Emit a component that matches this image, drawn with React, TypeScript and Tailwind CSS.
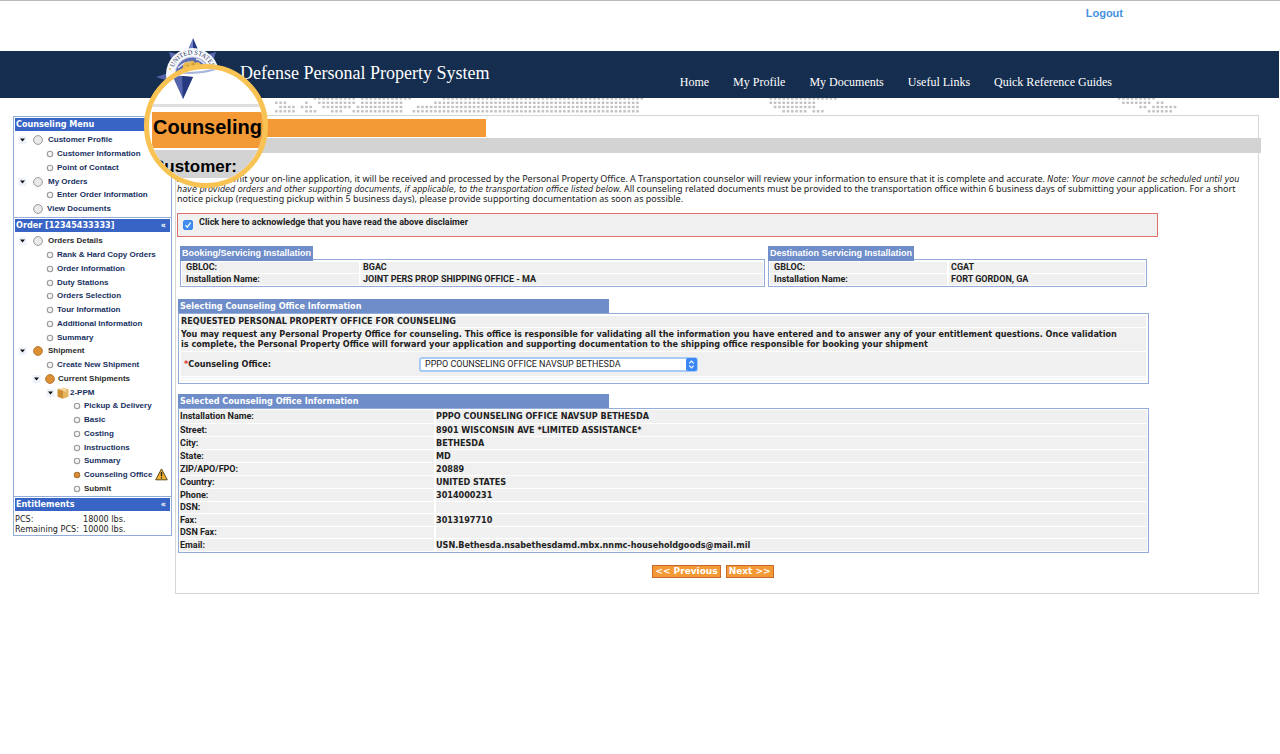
import type { ReactNode } from "react";

const WIDE = "font-['DejaVu_Sans_Condensed','DejaVu_Sans',sans-serif]";
const TITLE = "font-['DejaVu_Sans',sans-serif]";
const BODY = "font-['Noto_Sans',sans-serif]";
const LABEL = "font-['Roboto',sans-serif]";
const ARIAL = "font-['Liberation_Sans',sans-serif]";

/* ---------- header ---------- */

const navItems = ["Home", "My Profile", "My Documents", "Useful Links", "Quick Reference Guides"];

// Each row of the dotted world map is a list of [from, to] runs.
const mapRows: [number, number][][] = [
  [[313, 355], [360, 410], [441, 643], [769, 836], [1119, 1154]],
  [[275, 287], [304, 307], [317, 355], [360, 402], [433, 640], [769, 814], [1122, 1150], [1156, 1163]],
  [[279, 295], [300, 313], [321, 350], [356, 402], [416, 640], [773, 814], [1138, 1147], [1152, 1176]],
  [[275, 295], [304, 317], [330, 342], [351, 402], [411, 640], [781, 806], [811, 823], [1147, 1172]],
];

function DottedMap() {
  const dots: ReactNode[] = [];
  mapRows.forEach((runs, r) => {
    for (let i = 0; i < 215; i++) {
      const x = 276.3 + i * 4.3;
      if (runs.some(([a, b]) => x >= a && x <= b + 0.5)) {
        dots.push(<rect key={`${r}-${i}`} x={x - 1.3} y={r * 4.3 - 0.9} width="2.6" height="2.6" rx="0.6" />);
      }
    }
  });
  return (
    <svg width="1280" height="17" className="block max-w-none" fill="#c3c3c3" aria-hidden="true">
      {dots}
    </svg>
  );
}

function Seal() {
  return (
    <svg width="74" height="76" viewBox="0 0 74 76" aria-hidden="true">
      <path d="M13 14 L36 20 L20 36Z M60 14 L37 20 L53 36Z" fill="#5a68b0" />
      <path d="M0 39 L16 34 V44Z" fill="#5563ab" />
      <path d="M37 0 L30 16 L37 20Z" fill="#6f83c4" />
      <path d="M37 0 L44 16 L37 20Z" fill="#253a82" />
      <circle cx="36.500" cy="36.500" r="26.500" fill="#f7f8fb" />
      <circle cx="36.500" cy="36.500" r="17.500" fill="#5c6cae" stroke="#cfd6ea" strokeWidth="1" />
      <path d="M20 36 q8 -9 16 -1 M22 30 q6 -6 12 -6 M50 28 q-4 -6 -10 -7 M38 34 q8 -7 15 2" stroke="#dfe4f3" strokeWidth="1.300" fill="none" />
      <path d="M27 27 q3 -5 6 -2 q3 -5 6 0 q4 -3 6 2 q4 2 1 6 q-4 4 -8 1 q-4 4 -7 -1 q-5 1 -4 -6z" fill="#e9b84c" />
      <path d="M31 27 l3 3 M37 25 l1 6 M42 28 l-2 4" stroke="#a3761f" strokeWidth="0.900" />
      <circle cx="14" cy="31" r="1" fill="#e9b84c" />
      <defs>
        <path id="seal-arc" d="M16.500 36.500 A 20 20 0 0 1 56.500 36.500" />
      </defs>
      <text fontSize="6.500" fontFamily="Liberation Serif, serif" fill="#28335c">
        <textPath href="#seal-arc" startOffset="50%" textAnchor="middle">UNITED STATES</textPath>
      </text>
    </svg>
  );
}

/* ---------- sidebar ---------- */

type Icon = "big" | "small" | "bigOn" | "smallOn" | "box";
type Node = { text: string; icon: Icon; pad: string; open?: boolean; dark?: boolean; warn?: boolean };

const L0 = "pl-[3px] gap-[4px]";
const L0Leaf = "pl-[18px] gap-[3px]";
const L1Leaf = "pl-[32px] gap-[3px]";
const L1 = "pl-[17px] gap-[2px]";
const L2 = "pl-[31px] gap-[1px]";
const L3Leaf = "pl-[59px] gap-[3px]";

const counselingMenu: Node[] = [
  { text: "Customer Profile", icon: "big", pad: L0, open: true },
  { text: "Customer Information", icon: "small", pad: L1Leaf },
  { text: "Point of Contact", icon: "small", pad: L1Leaf },
  { text: "My Orders", icon: "big", pad: L0, open: true },
  { text: "Enter Order Information", icon: "small", pad: L1Leaf },
  { text: "View Documents", icon: "big", pad: L0Leaf },
];

const orderMenu: Node[] = [
  { text: "Orders Details", icon: "big", pad: L0, open: true, dark: true },
  { text: "Rank & Hard Copy Orders", icon: "small", pad: L1Leaf },
  { text: "Order Information", icon: "small", pad: L1Leaf },
  { text: "Duty Stations", icon: "small", pad: L1Leaf },
  { text: "Orders Selection", icon: "small", pad: L1Leaf },
  { text: "Tour Information", icon: "small", pad: L1Leaf },
  { text: "Additional Information", icon: "small", pad: L1Leaf },
  { text: "Summary", icon: "small", pad: L1Leaf },
  { text: "Shipment", icon: "bigOn", pad: L0, open: true, dark: true },
  { text: "Create New Shipment", icon: "small", pad: L1Leaf },
  { text: "Current Shipments", icon: "bigOn", pad: L1, open: true, dark: true },
  { text: "2-PPM", icon: "box", pad: L2, open: true },
  { text: "Pickup & Delivery", icon: "small", pad: L3Leaf },
  { text: "Basic", icon: "small", pad: L3Leaf },
  { text: "Costing", icon: "small", pad: L3Leaf },
  { text: "Instructions", icon: "small", pad: L3Leaf },
  { text: "Summary", icon: "small", pad: L3Leaf },
  { text: "Counseling Office", icon: "smallOn", pad: L3Leaf, warn: true },
  { text: "Submit", icon: "small", pad: L3Leaf, dark: true },
];

function NodeIcon({ icon }: { icon: Icon }) {
  if (icon === "box") {
    return (
      <svg width="12" height="12" viewBox="0 0 12 12" className="shrink-0" aria-hidden="true">
        <path d="M0.500 2 L6 0.500 L11.500 2 L6 3.500Z" fill="#f3d08d" />
        <path d="M0.500 2 L6 3.500 V11.800 L0.500 9.800Z" fill="#d08f35" />
        <path d="M6 3.500 L11.500 2 V9.800 L6 11.800Z" fill="#e5b45f" />
        <path d="M2.800 1.400 L8.300 2.900 V5" stroke="#fbe7bd" strokeWidth="1" fill="none" />
      </svg>
    );
  }
  if (icon === "big" || icon === "bigOn") {
    return (
      <svg width="12" height="12" viewBox="0 0 12 12" className="shrink-0" aria-hidden="true">
        <circle cx="6" cy="6" r="4.400" fill={icon === "big" ? "#e9e9e9" : "#dd9033"} stroke={icon === "big" ? "#9a9a9a" : "#b67a38"} strokeWidth="1" />
      </svg>
    );
  }
  return (
    <svg width="8" height="8" viewBox="0 0 8 8" className="shrink-0" aria-hidden="true">
      <circle cx="4" cy="4" r="2.700" fill={icon === "small" ? "#f4f4f4" : "#dd8a30"} stroke={icon === "small" ? "#9c9c9c" : "#a8763e"} strokeWidth="1.100" />
    </svg>
  );
}

function Tree({ nodes }: { nodes: Node[] }) {
  return (
    <ul className={`${ARIAL} pt-[2px] text-[8px] leading-[14px] font-bold [&>li]:h-[14px] [&>li:nth-child(4n)]:h-[13px]`}>
      {nodes.map((n, i) => (
        <li key={i} className={`flex items-center whitespace-nowrap ${n.pad}`}>
          {n.open && (
            <svg width="11" height="10" viewBox="0 0 11 10" className="shrink-0" aria-hidden="true">
              <rect x="1.500" y="1" width="8" height="8" fill="#eef3fb" />
              <path d="M3 3.500 H8 L5.500 6.500Z" fill="#111" />
            </svg>
          )}
          <NodeIcon icon={n.icon} />
          <a href="#" className={n.dark ? "text-[#2b2b2b]" : "text-[#17305f]"}>{n.text}</a>
          {n.warn && (
            <svg width="13" height="13" viewBox="0 0 13 13" className="shrink-0 self-start" role="img" aria-label="Warning">
              <path d="M6.500 0.900 L12.300 11.800 H0.700Z" fill="#f3b334" stroke="#5b4a1c" strokeWidth="1" strokeLinejoin="round" />
              <path d="M6.500 4 V8.200 M6.500 9.200 V10.600" stroke="#222" strokeWidth="1.400" />
            </svg>
          )}
        </li>
      ))}
    </ul>
  );
}

function SideTitle({ children, collapse }: { children: ReactNode; collapse?: boolean }) {
  return (
    <h2 className={`${WIDE} mx-px mt-px flex h-[13px] items-center justify-between bg-[#3864c6] pr-[4px] pl-px text-[9px] leading-[13px] font-bold text-white`}>
      <span>{children}</span>
      {collapse && <button type="button" aria-label="Collapse">«</button>}
    </h2>
  );
}

function Sidebar() {
  return (
    <nav className="mt-px w-[159px] shrink-0 self-start border border-[#93acd9]">
      <SideTitle>Counseling Menu</SideTitle>
      <Tree nodes={counselingMenu} />
      <div className="mt-px border-t border-[#93acd9]">
        <SideTitle collapse>Order [12345433333]</SideTitle>
        <Tree nodes={orderMenu} />
      </div>
      <div className="border-t border-[#93acd9]">
        <SideTitle collapse>Entitlements</SideTitle>
        <dl className={`${WIDE} grid grid-cols-[68px_1fr] pt-[3px] pb-px pl-px text-[9px] leading-[10px] whitespace-nowrap text-[#222]`}>
          <dt>PCS:</dt>
          <dd>18000 lbs.</dd>
          <dt>Remaining PCS:</dt>
          <dd>10000 lbs.</dd>
        </dl>
      </div>
    </nav>
  );
}

/* ---------- main content ---------- */

function Installation({ title, code, name, className }: { title: string; code: string; name: string; className: string }) {
  return (
    <section className={className}>
      <h3 className={`${ARIAL} relative -mb-[2px] w-fit bg-[#6e8dc9] px-[2px] text-[9px] leading-[15px] font-bold text-white`}>{title}</h3>
      <div className="border border-[#93acd9] p-px">
        <table className={`${LABEL} w-full border-collapse text-[9px] leading-[11px] font-bold text-[#222]`}>
          <tbody>
            {[["GBLOC:", code], ["Installation Name:", name]].map(([k, v]) => (
              <tr key={k} className="border-t border-white">
                <th scope="row" className="w-[178px] border-r-2 border-white bg-[#f0f0f0] p-0 pl-[4px] text-left">{k}</th>
                <td className="bg-[#f0f0f0] p-0 pl-[2px]">{v}</td>
              </tr>
            ))}
          </tbody>
        </table>
      </div>
    </section>
  );
}

function SectionTitle({ children }: { children: ReactNode }) {
  return (
    <h3 className={`${WIDE} w-[431px] bg-[#6e8dc9] px-[2px] text-[9px] leading-[14px] font-bold text-white`}>{children}</h3>
  );
}

const officeRows: [string, string][] = [
  ["Installation Name:", "PPPO COUNSELING OFFICE NAVSUP BETHESDA"],
  ["Street:", "8901 WISCONSIN AVE *LIMITED ASSISTANCE*"],
  ["City:", "BETHESDA"],
  ["State:", "MD"],
  ["ZIP/APO/FPO:", "20889"],
  ["Country:", "UNITED STATES"],
  ["Phone:", "3014000231"],
  ["DSN:", ""],
  ["Fax:", "3013197710"],
  ["DSN Fax:", ""],
  ["Email:", "USN.Bethesda.nsabethesdamd.mbx.nnmc-householdgoods@mail.mil"],
];

function Content() {
  const button = `${TITLE} h-[13px] border border-[#c9682c] bg-[#f39a37] px-[2px] text-[9px] leading-[11px] font-bold text-white`;
  return (
    <main className="mr-[21px] min-w-0 flex-1 border border-[#d6d6d6] pb-[15px]">
      <div className="mt-[3px] ml-px h-[18px] w-[309px] bg-[#f39a37]" />
      <div className="mt-px -mr-[3px] h-[15px] bg-[#d3d3d3]" />

      <p className={`${BODY} mt-[21px] pl-px text-[9px] leading-[10px] whitespace-nowrap text-[#222]`}>
        After you submit your on-line application, it will be received and processed by the Personal Property Office. A Transportation counselor will review your information to ensure that it is complete and accurate. <i className={WIDE}>Note: Your move cannot be scheduled until you</i>
        <br />
        <i className={WIDE}>have provided orders and other supporting documents, if applicable, to the transportation office listed below.</i> All counseling related documents must be provided to the transportation office within 6 business days of submitting your application. For a short
        <br />
        notice pickup (requesting pickup within 5 business days), please provide supporting documentation as soon as possible.
      </p>

      <div className="mt-[9px] mr-[100px] ml-px flex h-[24px] gap-[6px] border border-[#e0706a] bg-[#f0f0f0] pt-[6px] pl-[5px]">
        <span className="relative h-[10px] w-[10px]">
          <input id="ack" type="checkbox" defaultChecked className="peer block h-[10px] w-[10px] appearance-none rounded-[2px] border border-[#3d86e8] bg-white checked:bg-[#3f8ef2]" />
          <svg viewBox="0 0 10 10" className="pointer-events-none absolute inset-0 hidden h-[10px] w-[10px] peer-checked:block" aria-hidden="true">
            <path d="M2.500 5.200 L4.300 7.300 L7.500 2.700" stroke="#fff" strokeWidth="1.300" fill="none" />
          </svg>
        </span>
        <label htmlFor="ack" className={`${LABEL} -mt-[3px] text-[9px] leading-[11px] font-bold text-[#222]`}>
          Click here to acknowledge that you have read the above disclaimer
        </label>
      </div>

      <div className="mt-[9px] mr-[111px] ml-[4px] flex gap-[3px]">
        <Installation title="Booking/Servicing Installation" code="BGAC" name="JOINT PERS PROP SHIPPING OFFICE - MA" className="flex-[585]" />
        <Installation title="Destination Servicing Installation" code="CGAT" name="FORT GORDON, GA" className="flex-[379]" />
      </div>

      <section className="mt-[12px] mr-[109px] ml-[2px]">
        <SectionTitle>Selecting Counseling Office Information</SectionTitle>
        <div className={`${WIDE} flex flex-col gap-px border border-[#93acd9] px-[2px] pt-[2px] pb-[2px] text-[9px] leading-[10px] font-bold text-[#222]`}>
          <p className="bg-[#f0f0f0] pb-px">REQUESTED PERSONAL PROPERTY OFFICE FOR COUNSELING</p>
          <p className="bg-[#f0f0f0] pt-px pb-[2px]">
            You may request any Personal Property Office for counseling. This office is responsible for validating all the information you have entered and to answer any of your entitlement questions. Once validation
            <br />
            is complete, the Personal Property Office will forward your application and supporting documentation to the shipping office responsible for booking your shipment
          </p>
          <div className="flex h-[24px] items-center bg-[#f0f0f0] pl-[3px]">
            <label htmlFor="office" className="w-[235px]">
              <span className="text-[#d33]">*</span>Counseling Office:
            </label>
            <span className="relative">
              <select id="office" className={`${LABEL} block h-[15px] w-[279px] appearance-none rounded-[3px] border-2 border-[#a8cbf6] bg-white px-[4px] text-[9px] leading-[11px] font-normal text-[#222]`}>
                <option>PPPO COUNSELING OFFICE NAVSUP BETHESDA</option>
              </select>
              <svg width="11" height="13" viewBox="0 0 11 13" className="pointer-events-none absolute top-px right-px" aria-hidden="true">
                <rect width="11" height="13" rx="2" fill="#3b87f3" />
                <path d="M3.300 5.300 L5.500 3 L7.700 5.300 M3.300 7.700 L5.500 10 L7.700 7.700" stroke="#fff" strokeWidth="1.100" fill="none" />
              </svg>
            </span>
          </div>
          <div className="h-px bg-[#f0f0f0]" />
          <div className="mt-px h-px bg-[#f4f4f4]" />
        </div>
      </section>

      <section className="mt-[10px] mr-[109px] ml-[2px]">
        <SectionTitle>Selected Counseling Office Information</SectionTitle>
        <div className="border border-[#93acd9] px-px pt-px">
          <table className="w-full border-collapse text-[9px] leading-[10px] font-bold text-[#222] [&_tr]:h-[13px] [&_tr:nth-child(8)]:h-[12px] [&_tr:nth-child(10)]:h-[12px]">
            <tbody>
              {officeRows.map(([k, v]) => (
                <tr key={k} className="border-b border-white">
                  <th scope="row" className={`${LABEL} w-[255px] border-r-2 border-white bg-[#f0f0f0] p-0 text-left`}>{k}</th>
                  <td className={`${WIDE} bg-[#f0f0f0] p-0`}>{v}</td>
                </tr>
              ))}
            </tbody>
          </table>
        </div>
      </section>

      <div className="mt-[12px] mr-[8px] flex justify-center gap-[5px]">
        <button type="button" className={button}>&lt;&lt; Previous</button>
        <button type="button" className={button}>Next &gt;&gt;</button>
      </div>
    </main>
  );
}

/* Round magnifying glass that lies over the page title. */
function Magnifier() {
  return (
    <div className={`${ARIAL} absolute top-[64px] left-[144px] h-[124px] w-[124px] overflow-hidden rounded-full border-[5px] border-[#f8c353] bg-white font-bold text-black`}>
      <svg width="114" height="35" viewBox="0 0 114 35" className="block" aria-hidden="true">
        <path d="M28 3 Q50 6 70 -1" stroke="#a9b4da" strokeWidth="2" fill="none" />
        <path d="M23 6 L44 8 L34 30Z" fill="#5465ad" />
        <path d="M33 7 L44 8 L34 30Z" fill="#273a80" />
      </svg>
      <div className="h-[3px] bg-[#dedede]" />
      <div className="mt-[5px] ml-[3px] h-[36px] bg-[#f39a37] pl-px text-[20px] leading-[30px]">Counseling</div>
      <div className="mt-[2px] ml-[3px] h-[28px] bg-[#d3d3d3] text-[17px] leading-[34px]">Customer:</div>
    </div>
  );
}

export default function App() {
  return (
    <div className="relative bg-white">
      <header className="border-t border-[#b9b9b9]">
        <div className="flex h-[50px] justify-end pt-[5px] pr-[157px]">
          <a href="#" className={`${ARIAL} text-[11px] leading-[15px] font-bold text-[#4592dd]`}>Logout</a>
        </div>
        <div className="mr-px flex h-[47px] items-center justify-between bg-[#152d4e] pr-[167px] pl-[240px] font-['Liberation_Serif',serif] text-white">
          <h1 className="pb-[3px] text-[18px] leading-[20px]">Defense Personal Property System</h1>
          <nav className="flex gap-[24px] pt-[15px] text-[12px] leading-[14px]">
            {navItems.map((t) => (
              <a key={t} href="#">{t}</a>
            ))}
          </nav>
        </div>
        <div className="h-[17px] overflow-hidden">
          <DottedMap />
        </div>
      </header>
      <div className="flex gap-[3px] pl-[13px]">
        <Sidebar />
        <Content />
      </div>
      <div className="absolute top-[38px] left-[156px]">
        <Seal />
      </div>
      <Magnifier />
    </div>
  );
}
